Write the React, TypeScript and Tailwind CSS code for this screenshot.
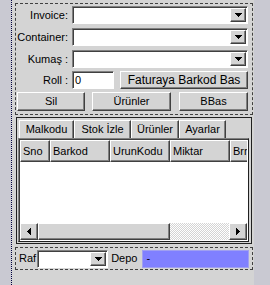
import React from "react";

const raised =
  "border border-t-white border-l-white border-r-[#404040] border-b-[#404040] shadow-[inset_-1px_-1px_0_#808080] bg-[#d4d4d4]";
const sunken =
  "border border-t-[#808080] border-l-[#808080] border-r-white border-b-white shadow-[inset_1px_1px_0_#404040]";

const Arrow = ({ dir }: { dir: "down" | "left" | "right" }) => {
  if (dir === "down")
    return (
      <svg width="7" height="4" shapeRendering="crispEdges">
        <rect x="0" y="0" width="7" height="1" />
        <rect x="1" y="1" width="5" height="1" />
        <rect x="2" y="2" width="3" height="1" />
        <rect x="3" y="3" width="1" height="1" />
      </svg>
    );
  const l = dir === "left";
  return (
    <svg width="4" height="7" shapeRendering="crispEdges">
      <rect x={l ? 3 : 0} y="0" width="1" height="7" />
      <rect x={l ? 2 : 1} y="1" width="1" height="5" />
      <rect x={l ? 1 : 2} y="2" width="1" height="3" />
      <rect x={l ? 0 : 3} y="3" width="1" height="1" />
    </svg>
  );
};

const Combo = ({ className = "" }: { className?: string }) => (
  <div className={`flex h-[18px] bg-white p-px ${sunken} ${className}`}>
    <div className="flex-1" />
    <div className={`w-[16px] flex items-center justify-center ${raised}`}>
      <Arrow dir="down" />
    </div>
  </div>
);

const Btn = ({ children, className = "" }: { children: React.ReactNode; className?: string }) => (
  <div className={`flex items-center justify-center whitespace-nowrap ${raised} ${className}`}>{children}</div>
);

const Field = ({ label, children }: { label: string; children: React.ReactNode }) => (
  <div className="flex items-center">
    <div className="w-[56px] text-right pr-[4px] whitespace-nowrap">{label}</div>
    {children}
  </div>
);

const tabs = [
  { t: "Malkodu", w: "w-[55px]" },
  { t: "Stok İzle", w: "w-[57px]" },
  { t: "Ürünler", w: "w-[48px]" },
  { t: "Ayarlar", w: "w-[47px]" },
];

const cols = [
  { t: "Sno", w: "w-[30px]" },
  { t: "Barkod", w: "w-[60px]" },
  { t: "UrunKodu", w: "w-[60px]" },
  { t: "Miktar", w: "w-[60px]" },
  { t: "Brm", w: "w-[30px]" },
];

export default function App() {
  return (
    <div className="w-[270px] h-[285px] bg-[#c9c9d2] flex overflow-hidden text-[11px] leading-none text-black font-['Liberation_Sans',Arial,sans-serif]">
      <div className="w-[11px] shrink-0" />
      <div className="w-[243px] h-full shrink-0 bg-[#d4d4d4] border-l border-dotted border-[#000040] flex flex-col">
        {/* top panel */}
        <div className="ml-[3px] mt-[3px] w-[238px] h-[112px] border border-dashed border-[#404040] flex flex-col">
          <div className="mt-[2px]">
            <Field label="Invoice:">
              <Combo className="w-[176px]" />
            </Field>
          </div>
          <div className="mt-[4px]">
            <Field label="Container:">
              <Combo className="w-[176px]" />
            </Field>
          </div>
          <div className="mt-[4px]">
            <Field label="Kumaş :">
              <Combo className="w-[176px]" />
            </Field>
          </div>
          <div className="mt-[3px]">
            <Field label="Roll :">
              <div className={`w-[42px] h-[18px] bg-white pl-[2px] flex items-center ${sunken}`}>0</div>
              <Btn className="ml-[6px] w-[128px] h-[18px] text-[12px]">Faturaya Barkod Bas</Btn>
            </Field>
          </div>
          <div className="mt-[3px] ml-[1px] flex">
            <Btn className="w-[68px] h-[19px]">Sil</Btn>
            <Btn className="ml-[7px] w-[79px] h-[19px]">Ürünler</Btn>
            <Btn className="ml-[8px] w-[69px] h-[19px]">BBas</Btn>
          </div>
        </div>

        {/* tab control */}
        <div className="ml-[4px] mt-[2px] w-[236px] h-[127px] border border-[#202020] flex flex-col">
          <div className="flex pl-[2px] pt-[2px]">
            {tabs.map((tb) => (
              <div
                key={tb.t}
                className={`${tb.w} h-[18px] flex items-center justify-center whitespace-nowrap border-t border-l border-r border-t-white border-l-white border-r-[#404040] shadow-[inset_-1px_0_0_#808080]`}
              >
                {tb.t}
              </div>
            ))}
          </div>
          <div className="flex-1 ml-px mr-[2px] mb-px border border-t-[#808080] border-l-[#808080] border-r-[#202020] border-b-[#202020] shadow-[inset_1px_1px_0_#404040] p-px flex flex-col bg-white overflow-hidden">
            <div className="flex h-[22px] shrink-0 bg-[#d4d4d4] overflow-hidden">
              {cols.map((c) => (
                <div
                  key={c.t}
                  className={`${c.w} shrink-0 h-full flex items-center pl-[2px] whitespace-nowrap overflow-hidden ${raised}`}
                >
                  {c.t}
                </div>
              ))}
            </div>
            <div className="flex-1" />
            <div className="flex h-[17px] shrink-0">
              <Btn className="w-[18px]">
                <Arrow dir="left" />
              </Btn>
              <div className={`w-[132px] ${raised}`} />
              <div className="flex-1 bg-[repeating-conic-gradient(#ffffff_0%_25%,#d4d4d4_0%_50%)] bg-[length:2px_2px]" />
              <Btn className="w-[18px]">
                <Arrow dir="right" />
              </Btn>
            </div>
          </div>
        </div>

        {/* bottom panel */}
        <div className="ml-[3px] mt-[3px] w-[238px] h-[23px] border border-dashed border-[#404040] flex items-center pl-[3px]">
          <span>Raf</span>
          <Combo className="ml-[1px] w-[71px]" />
          <span className="ml-[3px]">Depo</span>
          <div className="ml-[5px] w-[107px] h-[18px] bg-[#8080ff] border border-[#a0a0f0] flex items-center pl-[3px]">
            -
          </div>
        </div>
      </div>
    </div>
  );
}
